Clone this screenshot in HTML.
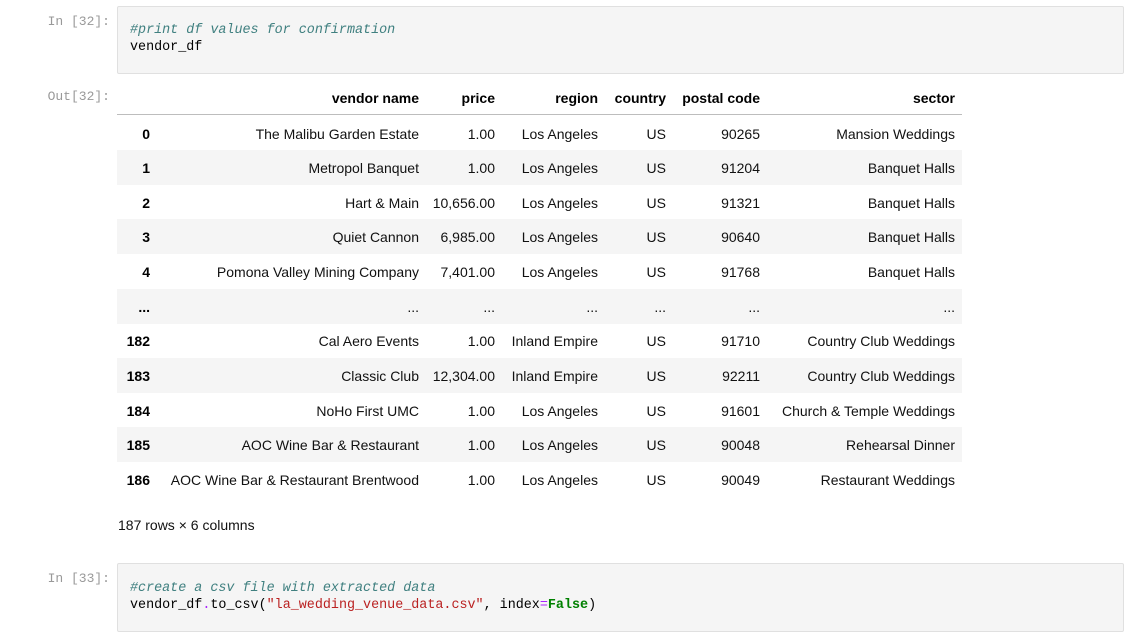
<!DOCTYPE html>
<html><head><meta charset="utf-8"><style>
body{margin:0;width:1148px;height:637px;background:#fff;position:relative;overflow:hidden;font-family:"Liberation Sans",sans-serif;font-size:14px;color:#111}
.p{position:absolute;font-family:"Liberation Mono",monospace;font-size:13px;color:#999;text-align:right;width:110px;left:0}
.cell{position:absolute;left:117px;width:1005px;background:#f5f5f5;border:1px solid #e0e0e0;border-radius:2px}
.code{position:absolute;left:12px;font-family:"Liberation Mono",monospace;font-size:13.4px;line-height:17px;white-space:pre;color:#000}
.cm{color:#408080;font-style:italic}
.row{position:absolute;left:117px;width:845px;height:35px}
.row.s{background:#f5f5f5}
.row span{position:absolute;top:1px;line-height:35px;text-align:right;white-space:nowrap}
.hd span{font-weight:bold;color:#000}
.c0{right:812px;font-weight:bold;color:#000}
.c1{right:543px}.c2{right:467px}.c3{right:364px}.c4{right:296px}.c5{right:202px}.c6{right:7px}
</style></head><body>
<div class="p" style="top:14px">In [32]:</div>
<div class="cell" style="top:6px;height:66px"><div class="code" style="top:15px"><span class="cm">#print df values for confirmation</span>
vendor_df</div></div>
<div class="p" style="top:89px">Out[32]:</div>
<div class="row hd" style="top:80px"><span class="c1">vendor name</span><span class="c2">price</span><span class="c3">region</span><span class="c4">country</span><span class="c5">postal code</span><span class="c6">sector</span></div>
<div style="position:absolute;left:117px;top:114px;width:845px;height:1px;background:#bdbdbd"></div>
<div class="row" style="top:116px"><span class="c0">0</span><span class="c1">The Malibu Garden Estate</span><span class="c2">1.00</span><span class="c3">Los Angeles</span><span class="c4">US</span><span class="c5">90265</span><span class="c6">Mansion Weddings</span></div>
<div class="row s" style="top:150px"><span class="c0">1</span><span class="c1">Metropol Banquet</span><span class="c2">1.00</span><span class="c3">Los Angeles</span><span class="c4">US</span><span class="c5">91204</span><span class="c6">Banquet Halls</span></div>
<div class="row" style="top:185px"><span class="c0">2</span><span class="c1">Hart &amp; Main</span><span class="c2">10,656.00</span><span class="c3">Los Angeles</span><span class="c4">US</span><span class="c5">91321</span><span class="c6">Banquet Halls</span></div>
<div class="row s" style="top:219px"><span class="c0">3</span><span class="c1">Quiet Cannon</span><span class="c2">6,985.00</span><span class="c3">Los Angeles</span><span class="c4">US</span><span class="c5">90640</span><span class="c6">Banquet Halls</span></div>
<div class="row" style="top:254px"><span class="c0">4</span><span class="c1">Pomona Valley Mining Company</span><span class="c2">7,401.00</span><span class="c3">Los Angeles</span><span class="c4">US</span><span class="c5">91768</span><span class="c6">Banquet Halls</span></div>
<div class="row s" style="top:289px"><span class="c0">...</span><span class="c1">...</span><span class="c2">...</span><span class="c3">...</span><span class="c4">...</span><span class="c5">...</span><span class="c6">...</span></div>
<div class="row" style="top:323px"><span class="c0">182</span><span class="c1">Cal Aero Events</span><span class="c2">1.00</span><span class="c3">Inland Empire</span><span class="c4">US</span><span class="c5">91710</span><span class="c6">Country Club Weddings</span></div>
<div class="row s" style="top:358px"><span class="c0">183</span><span class="c1">Classic Club</span><span class="c2">12,304.00</span><span class="c3">Inland Empire</span><span class="c4">US</span><span class="c5">92211</span><span class="c6">Country Club Weddings</span></div>
<div class="row" style="top:393px"><span class="c0">184</span><span class="c1">NoHo First UMC</span><span class="c2">1.00</span><span class="c3">Los Angeles</span><span class="c4">US</span><span class="c5">91601</span><span class="c6">Church &amp; Temple Weddings</span></div>
<div class="row s" style="top:427px"><span class="c0">185</span><span class="c1">AOC Wine Bar &amp; Restaurant</span><span class="c2">1.00</span><span class="c3">Los Angeles</span><span class="c4">US</span><span class="c5">90048</span><span class="c6">Rehearsal Dinner</span></div>
<div class="row" style="top:462px"><span class="c0">186</span><span class="c1">AOC Wine Bar &amp; Restaurant Brentwood</span><span class="c2">1.00</span><span class="c3">Los Angeles</span><span class="c4">US</span><span class="c5">90049</span><span class="c6">Restaurant Weddings</span></div>
<div style="position:absolute;left:118px;top:517px">187 rows × 6 columns</div>
<div class="p" style="top:571px">In [33]:</div>
<div class="cell" style="top:563px;height:67px"><div class="code" style="top:16px"><span class="cm">#create a csv file with extracted data</span>
vendor_df<span style="color:#aa22ff">.</span>to_csv(<span style="color:#ba2121">"la_wedding_venue_data.csv"</span>, index<span style="color:#aa22ff">=</span><b style="color:#008000">False</b>)</div></div>
</body></html>
